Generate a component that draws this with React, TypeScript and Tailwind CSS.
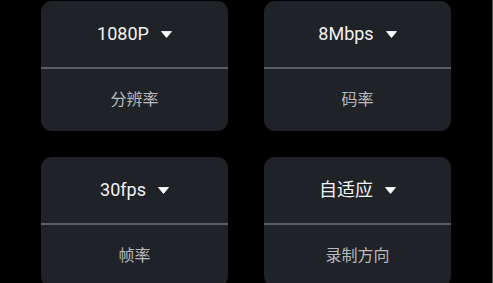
import React from "react";

const items = [
  { value: "1080P", label: "分辨率" },
  { value: "8Mbps", label: "码率" },
  { value: "30fps", label: "帧率" },
  { value: "自适应", label: "录制方向" },
];

function Caret() {
  return (
    <svg width="11" height="7" viewBox="0 0 11 7" className="ml-[12px]">
      <path d="M0.5 0.5 L10.5 0.5 L5.5 6.5 Z" fill="#ffffff" strokeLinejoin="round" stroke="#ffffff" strokeWidth="0.8" />
    </svg>
  );
}

function Card({ value, label }: { value: string; label: string }) {
  return (
    <div className="w-[187px] h-[130px] rounded-[11px] bg-[#1f2328] flex flex-col overflow-hidden">
      <div className="h-[66px] flex items-center justify-center">
        <span className="text-[18px] leading-none text-[#f2f2f2]">{value}</span>
        <Caret />
      </div>
      <div className="h-[2px] bg-[#5b5e62]" />
      <div className="flex-1 flex items-center justify-center">
        <span className="text-[16px] leading-none text-[#b9babb]">{label}</span>
      </div>
    </div>
  );
}

export default function App() {
  return (
    <div
      className="w-[493px] h-[283px] bg-black overflow-hidden flex border-r border-[#55585b]"
      style={{ fontFamily: 'Roboto, "Noto Sans CJK SC", sans-serif' }}
    >
      <div className="grid grid-cols-[187px_187px] gap-x-[36px] gap-y-[26px] pl-[41px] pt-[1px]">
        {items.map((it) => (
          <Card key={it.label} value={it.value} label={it.label} />
        ))}
      </div>
    </div>
  );
}
